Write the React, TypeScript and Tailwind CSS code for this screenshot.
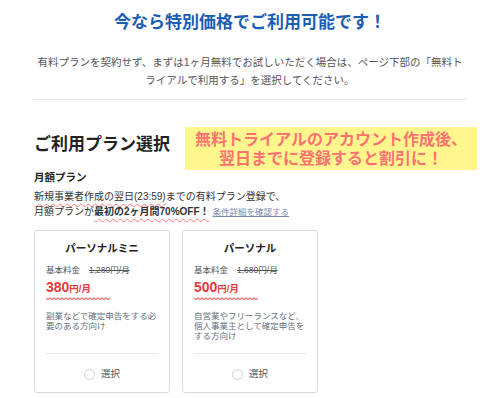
const plans = [
  {
    name: 'パーソナルミニ',
    base: '1,280円/月',
    price: '380',
    desc: '副業などで確定申告をする必要のある方向け',
  },
  {
    name: 'パーソナル',
    base: '1,680円/月',
    price: '500',
    desc: '自営業やフリーランスなど、個人事業主として確定申告をする方向け',
  },
];

const Squiggle = () => (
  <svg width="64" height="3" viewBox="0 0 64 3" className="block">
    <polyline
      points="0,1 2,2.5 4,1 6,2.5 8,1 10,2.5 12,1 14,2.5 16,1 18,2.5 20,1 22,2.5 24,1 26,2.5 28,1 30,2.5 32,1 34,2.5 36,1 38,2.5 40,1 42,2.5 44,1 46,2.5 48,1 50,2.5 52,1 54,2.5 56,1 58,2.5 60,1 62,2.5 64,1"
      fill="none"
      stroke="#ff8080"
      strokeWidth="1.5"
    />
  </svg>
);

const PlanCard = ({ plan }: { plan: (typeof plans)[number] }) => (
  <div className="w-[136px] h-[163px] border border-[#d6d9e0] rounded-[3px] flex flex-col px-[11px] pt-[10px]">
    <p className="text-center text-[10.5px] leading-[14px] font-bold text-[#222]">{plan.name}</p>
    <div className="mt-[9px] flex items-center text-[8.5px] leading-[12px] text-[#555]">
      <span>基本料金</span>
      <span className="ml-[9px] line-through">{plan.base}</span>
    </div>
    <div className="mt-[3px] text-[#e8393c] font-bold leading-[16px]">
      <span className="text-[14px]">{plan.price}</span>
      <span className="text-[9.5px]">円/月</span>
    </div>
    <Squiggle />
    <p className="mt-[11px] flex-1 text-[8.5px] leading-[10px] text-[#66707d]">{plan.desc}</p>
    <div className="border-t border-[#e3e5ea]" />
    <div className="mt-[13px] mb-[11px] flex items-center justify-center gap-[6px] h-[14px]">
      <span className="w-[11px] h-[11px] rounded-full border border-[#cfd3da] bg-white" />
      <span className="text-[9.5px] text-[#555]">選択</span>
    </div>
  </div>
);

export default function App() {
  return (
    <div className="w-[500px] h-[398px] overflow-hidden bg-white font-['Liberation_Sans','Noto_Sans_CJK_JP',sans-serif]">
      <div className="px-[34px] pt-[11px]">
        {/* Header */}
        <h1 className="text-center text-[17px] leading-[24px] font-bold text-[#1a5db3]">
          今なら特別価格でご利用可能です！
        </h1>
        <p className="mt-[18px] text-center text-[10.5px] leading-[18px] text-[#555]">
          有料プランを契約せず、まずは1ヶ月無料でお試しいただく場合は、ページ下部の「無料ト
          <br />
          ライアルで利用する」を選択してください。
        </p>
        <div className="mt-[10px] -mx-[1px] border-t border-[#e6e6e6]" />

        {/* Plan selection */}
        <div className="mt-[27px] flex items-center">
          <h2 className="-mt-[8px] shrink-0 text-[17px] leading-[22px] font-bold text-[#222]">ご利用プラン選択</h2>
          <div className="ml-[15px] w-[292px] shrink-0 bg-[#fff68e] py-[2.5px] text-center text-[16px] leading-[19px] font-bold text-[#ff7272]">
            無料トライアルのアカウント作成後、
            <br />
            翌日までに登録すると割引に！
          </div>
        </div>

        <p className="text-[10.5px] leading-[14px] font-bold text-[#222]">月額プラン</p>
        <div className="mt-[4.5px] text-[10px] leading-[15px] text-[#333]">
          <p>
            <span className="underline decoration-wavy decoration-[#ff7a7a] decoration-[1px] underline-offset-[3px]">
              新規事業者作成の翌日(23:59)
            </span>
            までの有料プラン登録で、
          </p>
          <p>
            月額プランが
            <span className="font-bold underline decoration-wavy decoration-[#ff7a7a] decoration-[1px] underline-offset-[3px]">
              最初の2ヶ月間70%OFF！
            </span>
            <span className="ml-[3px] text-[8.5px] text-[#7d8cae] underline">条件詳細を確認する</span>
          </p>
        </div>

        <div className="mt-[10.5px] flex gap-[12px]">
          {plans.map((p) => (
            <PlanCard key={p.name} plan={p} />
          ))}
        </div>
      </div>
    </div>
  );
}
